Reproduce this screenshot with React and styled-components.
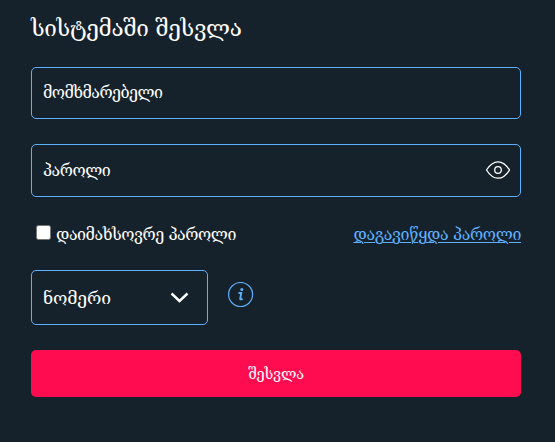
import React from "react";
import styled, { createGlobalStyle } from "styled-components";

const GlobalStyle = createGlobalStyle`
  * { box-sizing: border-box; }
  body { margin: 0; background: #16222b; }
  button, input { font: inherit; }
`;

const Form = styled.form`
  width: 555px;
  height: 442px;
  padding: 13px 34px 0 31px;
  display: flex;
  flex-direction: column;
  background: #16222b;
  color: #fff;
  font-family: "DejaVu Serif", serif;
  white-space: nowrap;
`;

const Text = styled.span`
  font-size: ${(p) => p.$size}px;
  letter-spacing: ${(p) => p.$track || 0}px;
  line-height: 24px;
`;

const Title = styled.h1`
  margin: 0 0 24px;
  height: 30px;
  font-weight: 400;
  display: flex;
  align-items: center;
`;

const Field = styled.div`
  height: ${(p) => p.$height}px;
  width: ${(p) => p.$width || "100%"};
  padding: 0 ${(p) => p.$end}px 0 11px;
  border: 1px solid #5eb0ff;
  border-radius: 5px;
  display: flex;
  align-items: center;
  justify-content: space-between;
`;

const PasswordField = styled(Field)`
  margin-top: 25px;
`;

const EyeIcon = styled.svg`
  margin-bottom: 2px;
`;

const Options = styled.div`
  height: 24px;
  margin: 25px 0 24px;
  display: flex;
  justify-content: space-between;
`;

const Remember = styled.label`
  display: flex;
  align-items: flex-start;
`;

const Checkbox = styled.input`
  width: 15px;
  height: 15px;
  margin: 3px 5px 0 5px;
  appearance: none;
  background: #fff;
  border: 1px solid #767676;
  border-radius: 2.5px;
`;

const Link = styled.a`
  padding-top: 1px;
  color: #5eb0ff;
  text-decoration: underline;
  text-decoration-thickness: 1px;
  text-underline-offset: 2px;
`;

const RememberText = styled(Text)`
  padding-top: 1px;
`;

const SelectRow = styled.div`
  display: flex;
  gap: 20px;
`;

const InfoIcon = styled.svg`
  margin-top: 12px;
`;

const Submit = styled.button`
  height: 47px;
  margin-top: 25px;
  padding: 0;
  border: 0;
  border-radius: 5px;
  color: #fff;
  background: #ff0b50;
`;

export default function App() {
  return (
    <>
      <GlobalStyle />
      <Form>
        <Title><Text $size={22.5} $track={-0.35}>სისტემაში შესვლა</Text></Title>
        <Field $height={52} $end={10}><Text $size={16} $track={-0.55}>მომხმარებელი</Text></Field>
        <PasswordField $height={53} $end={10}>
          <Text $size={16} $track={-0.5}>პაროლი</Text>
          <EyeIcon width="25" height="20" viewBox="0 0 25 20" fill="none" stroke="#fff" strokeWidth="1.3">
            <path d="M1.5 10C4.5 5.2 8.2 1.8 13 1.8S21.5 5.2 24.5 10C21.5 14.8 17.7 18.2 13 18.2S4.5 14.8 1.5 10Z" />
            <circle cx="13" cy="10" r="3.3" />
          </EyeIcon>
        </PasswordField>
        <Options>
          <Remember>
            <Checkbox type="checkbox" />
            <RememberText $size={16} $track={-0.45}>დაიმახსოვრე პაროლი</RememberText>
          </Remember>
          <Link><Text $size={16} $track={-0.35}>დაგავიწყდა პაროლი</Text></Link>
        </Options>
        <SelectRow>
          <Field $height={55} $width="177px" $end={18}>
            <Text $size={17.5} $track={-0.2}>ნომერი</Text>
            <svg width="19" height="14" viewBox="0 0 19 14" fill="none" stroke="#fff" strokeWidth="2.4">
              <path d="M1.5 2.5L9.5 10L17.5 2.5" />
            </svg>
          </Field>
          <InfoIcon width="26" height="26" viewBox="0 0 26 26" fill="none" stroke="#5eb0ff">
            <circle cx="12.6" cy="12.5" r="12" strokeWidth="1.2" />
            <circle cx="13.8" cy="7.6" r="1.5" fill="#5eb0ff" stroke="none" />
            <path d="M10.5 11H13.3L12.2 16.6Q12 18 14.6 17" strokeWidth="1.9" />
          </InfoIcon>
        </SelectRow>
        <Submit type="button"><Text $size={14.5} $track={-0.2}>შესვლა</Text></Submit>
      </Form>
    </>
  );
}
